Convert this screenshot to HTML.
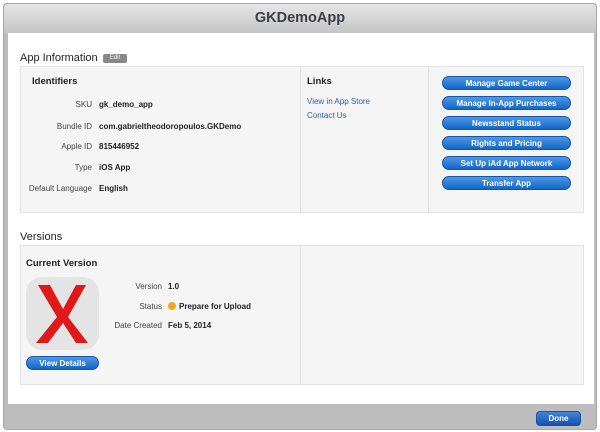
<!DOCTYPE html>
<html><head><style>
*{margin:0;padding:0;box-sizing:border-box}
body{width:600px;height:432px;background:#fff;font-family:"Liberation Sans",sans-serif;position:relative;overflow:hidden}
.a{position:absolute}
.win{left:3px;top:3px;width:594px;height:427px;background:#bdbdbd;border:1px solid #a8a8a8;border-radius:4px}
.tb{left:4px;top:4px;width:592px;height:29px;background:linear-gradient(#e6e6e6,#c4c4c4);border-radius:4px 4px 0 0;text-align:center;font-weight:bold;font-size:14.5px;color:#3a3f45;line-height:28px}
.content{left:8px;top:33px;width:586px;height:371px;background:#fff}
.box{background:#f5f5f5;border:1px solid #e3e3e3}
.h{font-size:11px;color:#222}
.lbl{font-size:8px;color:#444;text-align:right;width:80px}
.val{font-size:8px;color:#222;font-weight:bold}
.btn{left:442px;width:129px;height:14px;border-radius:7px;background:linear-gradient(#4d9ae6,#1565c8);border:1px solid #1556a8;color:#fff;font-size:8px;font-weight:bold;text-align:center;line-height:13px}
.lnk{font-size:8px;color:#2a5fa8}
</style></head><body>
<div class="a win"></div>
<div class="a tb">GKDemoApp</div>
<div class="a content"></div>
<div class="a h" style="left:20px;top:52px;font-size:11px">App Information</div>
<div class="a" style="left:103px;top:54px;width:24px;height:9px;background:#888;border-radius:2px;color:#fff;font-size:6px;text-align:center;line-height:9px">Edit</div>
<div class="a box" style="left:20px;top:66px;width:564px;height:147px"></div>
<div class="a" style="left:300px;top:67px;width:1px;height:145px;background:#e0e0e0"></div>
<div class="a" style="left:428px;top:67px;width:1px;height:145px;background:#e0e0e0"></div>
<div class="a h" style="left:32px;top:76px;font-weight:bold;font-size:9.5px">Identifiers</div>
<div class="a lbl" style="left:12px;top:100px">SKU</div><div class="a val" style="left:99px;top:100px">gk_demo_app</div>
<div class="a lbl" style="left:12px;top:122px">Bundle ID</div><div class="a val" style="left:99px;top:122px">com.gabrieltheodoropoulos.GKDemo</div>
<div class="a lbl" style="left:12px;top:142px">Apple ID</div><div class="a val" style="left:99px;top:142px">815446952</div>
<div class="a lbl" style="left:12px;top:163px">Type</div><div class="a val" style="left:99px;top:163px">iOS App</div>
<div class="a lbl" style="left:12px;top:184px">Default Language</div><div class="a val" style="left:99px;top:184px">English</div>
<div class="a h" style="left:307px;top:76px;font-weight:bold;font-size:9.5px">Links</div>
<div class="a lnk" style="left:307px;top:97px">View in App Store</div>
<div class="a lnk" style="left:307px;top:111px">Contact Us</div>
<div class="a btn" style="top:76px">Manage Game Center</div>
<div class="a btn" style="top:96px">Manage In-App Purchases</div>
<div class="a btn" style="top:116px">Newsstand Status</div>
<div class="a btn" style="top:136px">Rights and Pricing</div>
<div class="a btn" style="top:156px">Set Up iAd App Network</div>
<div class="a btn" style="top:176px">Transfer App</div>
<div class="a h" style="left:20px;top:231px;font-size:11px">Versions</div>
<div class="a box" style="left:20px;top:245px;width:564px;height:140px"></div>
<div class="a" style="left:300px;top:246px;width:1px;height:138px;background:#e0e0e0"></div>
<div class="a h" style="left:26px;top:258px;font-weight:bold;font-size:9.5px">Current Version</div>
<div class="a" style="left:26px;top:277px;width:73px;height:73px;background:#e4e4e4;border-radius:16px;overflow:hidden">
<svg width="73" height="73"><path d="M12 8 L24 8 L37 32 L50 8 L60 8 L42 40 L62 66 L50 66 L37 46 L22 66 L10 66 L31 40 Z" fill="#e01818"/></svg></div>
<div class="a btn" style="left:26px;top:356px;width:73px">View Details</div>
<div class="a lbl" style="left:82px;top:282px">Version</div><div class="a val" style="left:168px;top:282px">1.0</div>
<div class="a lbl" style="left:82px;top:302px">Status</div>
<div class="a" style="left:168px;top:302px;width:8px;height:8px;border-radius:50%;background:#f0a820"></div>
<div class="a val" style="left:179px;top:302px">Prepare for Upload</div>
<div class="a lbl" style="left:82px;top:321px">Date Created</div><div class="a val" style="left:168px;top:321px">Feb 5, 2014</div>
<div class="a btn" style="left:536px;top:411px;width:45px;height:15px;border-radius:4px;background:linear-gradient(#3f86d8,#1652b0)">Done</div>
</body></html>
